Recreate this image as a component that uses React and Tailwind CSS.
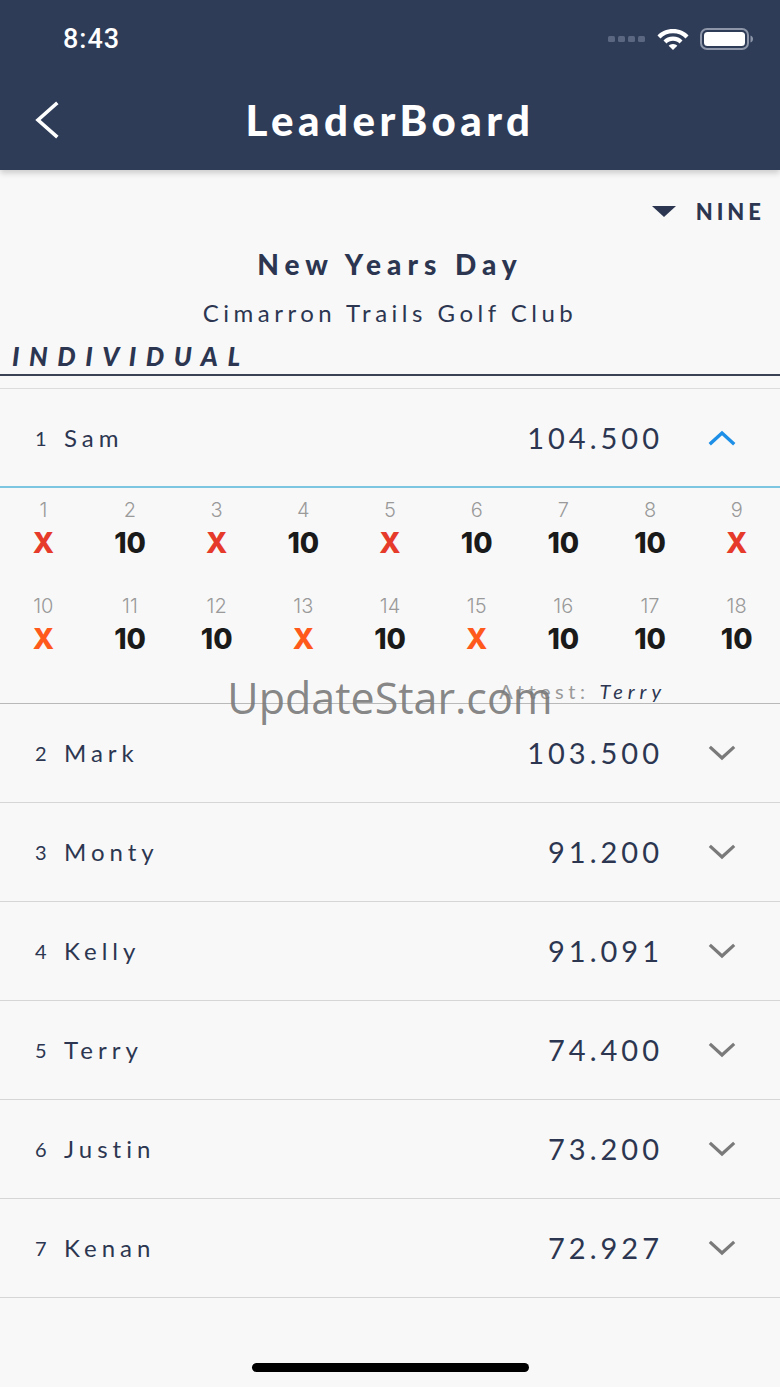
import React from "react";

const NAVY = "#2c3651";

function ChevronDown({ color = "#7a7a7a" }) {
  return (
    <svg width="28" height="18" viewBox="0 0 28 18">
      <polyline points="3,4 14,14 25,4" fill="none" stroke={color} strokeWidth="3.2" strokeLinecap="square" />
    </svg>
  );
}

function ChevronUp({ color = "#1e8fe6" }) {
  return (
    <svg width="28" height="18" viewBox="0 0 28 18">
      <polyline points="3,14 14,4 25,14" fill="none" stroke={color} strokeWidth="3.4" strokeLinecap="square" />
    </svg>
  );
}

const players = [
  { rank: 2, name: "Mark", score: "103.500" },
  { rank: 3, name: "Monty", score: "91.200" },
  { rank: 4, name: "Kelly", score: "91.091" },
  { rank: 5, name: "Terry", score: "74.400" },
  { rank: 6, name: "Justin", score: "73.200" },
  { rank: 7, name: "Kenan", score: "72.927" },
];

const front = ["X", "10", "X", "10", "X", "10", "10", "10", "X"];
const back = ["X", "10", "10", "X", "10", "X", "10", "10", "10"];

function HoleGrid({ values, start, xColor }) {
  return (
    <div className="grid grid-cols-9">
      {values.map((v, i) => (
        <div key={i} className="flex flex-col items-center">
          <div className="h-[30px] flex items-center text-[20px] font-light text-[#9a9a9a] font-['Inter',sans-serif]">
            {start + i}
          </div>
          <div
            className={
              "h-[36px] flex items-center text-[28px] font-extrabold font-['Inter',sans-serif] " +
              (v === "X" ? xColor : "text-[#1a1a1a]")
            }
          >
            {v}
          </div>
        </div>
      ))}
    </div>
  );
}

function Row({ rank, name, score }) {
  return (
    <div className="h-[99px] border-b border-[#d6d6d6] flex items-center pl-[35px] pr-[44px] font-['Lato',sans-serif] text-[#2c3651]">
      <span className="text-[20px] w-[29px] tracking-[1px]">{rank}</span>
      <span className="text-[24px] tracking-[5px]">{name}</span>
      <span className="ml-auto text-[29px] tracking-[4px] mr-[45px]">{score}</span>
      <ChevronDown />
    </div>
  );
}

export default function App() {
  return (
    <div className="relative w-[780px] h-[1387px] bg-[#f8f8f8] flex flex-col overflow-hidden font-['Lato',sans-serif]">
      {/* Header */}
      <div className="bg-[#2e3c58] h-[170px] shrink-0 shadow-[0_3px_6px_rgba(0,0,0,0.18)] relative z-10">
        <div className="h-[78px] flex items-center pl-[63px] pr-[26px]">
          <span className="text-white text-[27px] font-['Roboto',sans-serif] font-medium tracking-[1px]">8:43</span>
          <div className="ml-auto flex items-center gap-[10px]">
            <svg width="38" height="8" viewBox="0 0 38 8">
              <rect x="0" y="1" width="7" height="6" rx="1.5" fill="#5b6780" />
              <rect x="10" y="1" width="7" height="6" rx="1.5" fill="#5b6780" />
              <rect x="20" y="1" width="7" height="6" rx="1.5" fill="#5b6780" />
              <rect x="30" y="1" width="7" height="6" rx="1.5" fill="#5b6780" />
            </svg>
            <svg width="34" height="24" viewBox="0 0 34 24">
              <path d="M17 2C10.5 2 5 4.5 1.5 8.5l3 3C7.5 8.2 12 6.3 17 6.3s9.5 1.9 12.5 5.2l3-3C29 4.5 23.5 2 17 2z" fill="white" />
              <path d="M17 9.5c-4 0-7.2 1.5-9.5 4l3 3c1.6-1.7 3.9-2.7 6.5-2.7s4.9 1 6.5 2.7l3-3c-2.3-2.5-5.5-4-9.5-4z" fill="white" />
              <path d="M17 17c-1.8 0-3.3.7-4.3 1.8L17 23l4.3-4.2C20.3 17.7 18.8 17 17 17z" fill="white" />
            </svg>
            <svg width="54" height="22" viewBox="0 0 54 22">
              <rect x="1" y="1" width="47" height="20" rx="6" fill="none" stroke="#8e97a9" strokeWidth="2" />
              <rect x="4" y="4" width="41" height="14" rx="3.5" fill="white" />
              <path d="M50.5 7.5c1.5.5 2.5 1.8 2.5 3.5s-1 3-2.5 3.5z" fill="#8e97a9" />
            </svg>
          </div>
        </div>
        <div className="h-[92px] grid grid-cols-[100px_1fr_100px] items-center pb-[8px]">
          <div className="pl-[33px]">
            <svg width="28" height="38" viewBox="0 0 28 38">
              <polyline points="23,3 5,19 23,35" fill="none" stroke="white" strokeWidth="3.6" strokeLinecap="square" strokeLinejoin="miter" />
            </svg>
          </div>
          <div className="text-center text-white text-[42px] font-black tracking-[4.5px] font-['Lato',sans-serif]">
            LeaderBoard
          </div>
          <div />
        </div>
      </div>

      {/* Filter */}
      <div className="mt-[28px] h-[26px] flex items-center justify-end pr-[15px] gap-[20px]">
        <svg width="24" height="11" viewBox="0 0 24 11">
          <polygon points="0,0 24,0 12,11" fill={NAVY} />
        </svg>
        <span className="text-[22px] font-black tracking-[4px] text-[#2c3651]">NINE</span>
      </div>

      <div className="mt-[24px] text-center text-[28px] font-black tracking-[6px] text-[#2c3651] leading-[32px]">
        New Years Day
      </div>
      <div className="mt-[17px] text-center text-[24px] tracking-[4.5px] text-[#2c3651] leading-[32px]">
        Cimarron Trails Golf Club
      </div>
      <div className="mt-[12px] pl-[12px] text-[26px] italic font-black tracking-[9.5px] text-[#2c3651] leading-[30px]">
        INDIVIDUAL
      </div>
      <div className="mt-[3px] h-[2px] bg-[#3b4256]" />
      <div className="mt-[12px] h-px bg-[#dcdcdc]" />

      {/* Expanded row */}
      <div className="h-[97px] flex items-center pl-[35px] pr-[44px] text-[#2c3651]">
        <span className="text-[20px] w-[29px] tracking-[1px]">1</span>
        <span className="text-[24px] tracking-[5px]">Sam</span>
        <span className="ml-auto text-[29px] tracking-[4px] mr-[45px]">104.500</span>
        <ChevronUp />
      </div>
      <div className="h-[2px] bg-[#7cc6e2]" />
      <div className="pt-[7px] flex flex-col gap-y-[30px]">
        <HoleGrid values={front} start={1} xColor="text-[#e63a2b]" />
        <HoleGrid values={back} start={10} xColor="text-[#ff5a1c]" />
      </div>
      <div className="mt-[21px] h-[25px] flex items-center justify-end pr-[114px] text-[20px]">
        <span className="text-[#9a9a9a] mr-[10px] tracking-[4.5px]">Attest:</span>
        <span className="italic text-[#2c3651] tracking-[5px]">Terry</span>
      </div>
      <div className="h-px bg-[#b9b9b9]" />

      {players.map((p) => (
        <Row key={p.rank} {...p} />
      ))}

      <div className="mt-auto mb-[15px] mx-auto w-[277px] h-[9px] rounded-full bg-black" />

      {/* watermark */}
      <div className="absolute left-0 right-0 top-[666px] text-center text-[43px] text-[#777777]/90 font-['Open_Sans',sans-serif] pointer-events-none">
        UpdateStar.com
      </div>
    </div>
  );
}
